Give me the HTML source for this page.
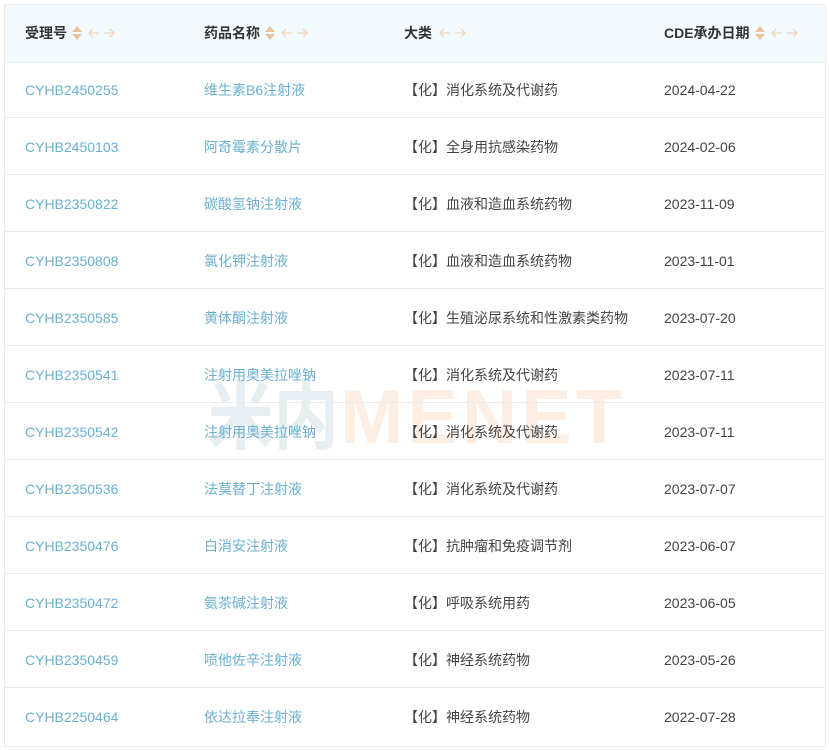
<!DOCTYPE html><html><head><meta charset="utf-8"><style>
body{margin:0;background:#fff;width:829px;height:750px;overflow:hidden;font-family:"Liberation Sans","Noto Sans CJK SC",sans-serif;position:relative}
.t{position:absolute;left:4px;top:4px;width:820px;height:741px;border:1px solid #e8ecee;box-sizing:content-box}
.h{position:absolute;left:0;top:0;width:820px;height:57px;background:#f3fafd;border-bottom:1px solid #e6edf0}
.r{position:absolute;left:0;width:820px;height:56px;border-bottom:1px solid #e9ecee}
.c{position:absolute;top:1px;line-height:56px;font-size:14px;white-space:nowrap}
.h .c{font-weight:bold;color:#333;line-height:57px;top:0}
.l{color:#6cb0cf}.d{color:#444}
.ic{display:inline-block;vertical-align:middle;margin-left:5px;position:relative;top:-1px}
.wm{position:absolute;left:208px;top:355px;font:bold 76px "Liberation Sans","Noto Sans CJK SC",sans-serif;white-space:nowrap}
.wm .a{display:inline-block;transform:scaleX(0.86);transform-origin:left;margin-right:-20px;color:#e6eef2}
</style></head><body>
<div class="wm"><span class="a">米内</span><span style="color:#fdeee3;letter-spacing:4px">MENET</span></div>
<div class="t">
<div class="h">
<div class="c" style="left:20px">受理号<svg class="ic" width="46" height="18"><path d="M5 2l5 6H0z M5 16l5-6H0z" fill="#e8c49c"/><path d="M27 9h-10M21 5l-4 4 4 4M32 9h10M38 5l4 4-4 4" stroke="#efd6bd" fill="none" stroke-width="1.3"/></svg></div>
<div class="c" style="left:199px">药品名称<svg class="ic" width="46" height="18"><path d="M5 2l5 6H0z M5 16l5-6H0z" fill="#e8c49c"/><path d="M27 9h-10M21 5l-4 4 4 4M32 9h10M38 5l4 4-4 4" stroke="#efd6bd" fill="none" stroke-width="1.3"/></svg></div>
<div class="c" style="left:399px">大类<svg class="ic" width="32" height="18"><path d="M13 9h-10M7 5l-4 4 4 4M18 9h10M24 5l4 4-4 4" stroke="#efd6bd" fill="none" stroke-width="1.3"/></svg></div>
<div class="c" style="left:659px">CDE承办日期<svg class="ic" width="46" height="18"><path d="M5 2l5 6H0z M5 16l5-6H0z" fill="#e8c49c"/><path d="M27 9h-10M21 5l-4 4 4 4M32 9h10M38 5l4 4-4 4" stroke="#efd6bd" fill="none" stroke-width="1.3"/></svg></div>
</div>
</div>
<div class="t" style="border:none;background:none">
<div class="r" style="top:57px"><div class="c l" style="left:21px">CYHB2450255</div><div class="c l" style="left:200px">维生素B6注射液</div><div class="c d" style="left:400px">【化】消化系统及代谢药</div><div class="c d" style="left:660px">2024-04-22</div></div>
<div class="r" style="top:114px"><div class="c l" style="left:21px">CYHB2450103</div><div class="c l" style="left:200px">阿奇霉素分散片</div><div class="c d" style="left:400px">【化】全身用抗感染药物</div><div class="c d" style="left:660px">2024-02-06</div></div>
<div class="r" style="top:171px"><div class="c l" style="left:21px">CYHB2350822</div><div class="c l" style="left:200px">碳酸氢钠注射液</div><div class="c d" style="left:400px">【化】血液和造血系统药物</div><div class="c d" style="left:660px">2023-11-09</div></div>
<div class="r" style="top:228px"><div class="c l" style="left:21px">CYHB2350808</div><div class="c l" style="left:200px">氯化钾注射液</div><div class="c d" style="left:400px">【化】血液和造血系统药物</div><div class="c d" style="left:660px">2023-11-01</div></div>
<div class="r" style="top:285px"><div class="c l" style="left:21px">CYHB2350585</div><div class="c l" style="left:200px">黄体酮注射液</div><div class="c d" style="left:400px">【化】生殖泌尿系统和性激素类药物</div><div class="c d" style="left:660px">2023-07-20</div></div>
<div class="r" style="top:342px"><div class="c l" style="left:21px">CYHB2350541</div><div class="c l" style="left:200px">注射用奥美拉唑钠</div><div class="c d" style="left:400px">【化】消化系统及代谢药</div><div class="c d" style="left:660px">2023-07-11</div></div>
<div class="r" style="top:399px"><div class="c l" style="left:21px">CYHB2350542</div><div class="c l" style="left:200px">注射用奥美拉唑钠</div><div class="c d" style="left:400px">【化】消化系统及代谢药</div><div class="c d" style="left:660px">2023-07-11</div></div>
<div class="r" style="top:456px"><div class="c l" style="left:21px">CYHB2350536</div><div class="c l" style="left:200px">法莫替丁注射液</div><div class="c d" style="left:400px">【化】消化系统及代谢药</div><div class="c d" style="left:660px">2023-07-07</div></div>
<div class="r" style="top:513px"><div class="c l" style="left:21px">CYHB2350476</div><div class="c l" style="left:200px">白消安注射液</div><div class="c d" style="left:400px">【化】抗肿瘤和免疫调节剂</div><div class="c d" style="left:660px">2023-06-07</div></div>
<div class="r" style="top:570px"><div class="c l" style="left:21px">CYHB2350472</div><div class="c l" style="left:200px">氨茶碱注射液</div><div class="c d" style="left:400px">【化】呼吸系统用药</div><div class="c d" style="left:660px">2023-06-05</div></div>
<div class="r" style="top:627px"><div class="c l" style="left:21px">CYHB2350459</div><div class="c l" style="left:200px">喷他佐辛注射液</div><div class="c d" style="left:400px">【化】神经系统药物</div><div class="c d" style="left:660px">2023-05-26</div></div>
<div class="r" style="top:684px;border-bottom:none"><div class="c l" style="left:21px">CYHB2250464</div><div class="c l" style="left:200px">依达拉奉注射液</div><div class="c d" style="left:400px">【化】神经系统药物</div><div class="c d" style="left:660px">2022-07-28</div></div>
</div>
</body></html>
